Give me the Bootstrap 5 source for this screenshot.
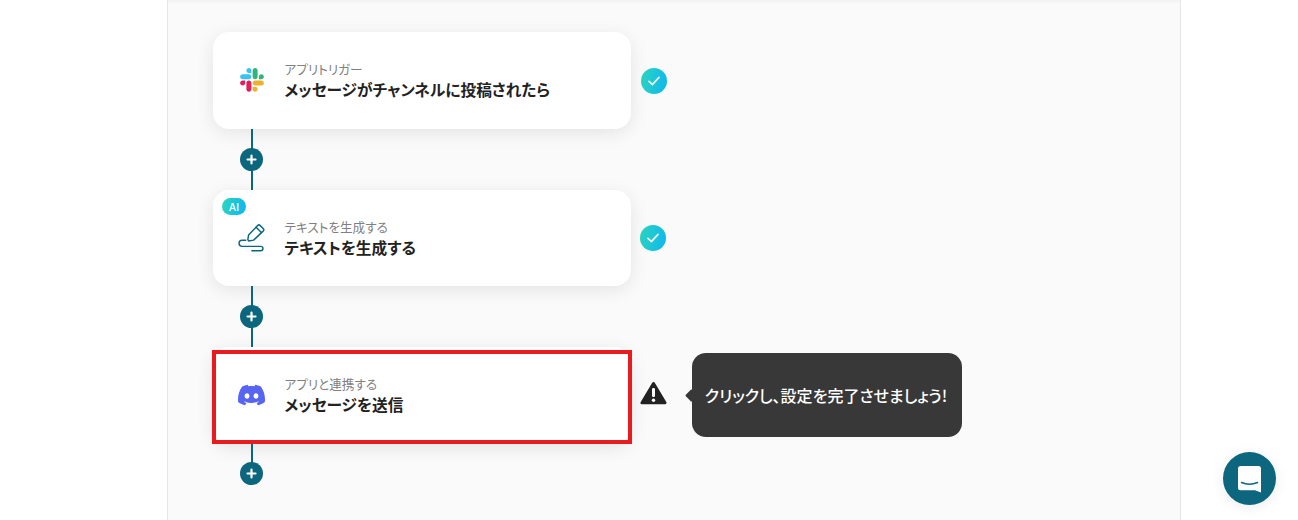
<!DOCTYPE html>
<html lang="ja">
<head>
<meta charset="utf-8">
<title>Flow</title>
<link href="https://cdn.jsdelivr.net/npm/bootstrap@5.3.0/dist/css/bootstrap.min.css" rel="stylesheet">
<style>
html,body{height:520px;overflow:hidden;background:#fff;font-family:"Noto Sans CJK JP","Noto Sans",sans-serif;color:#222;font-feature-settings:"palt"}
.page-wrap{padding-left:167px;padding-right:117px;height:520px}
.flow-panel{height:520px;background:#fafafa;border-left:1px solid #e6e6e6;border-right:1px solid #e6e6e6;padding:32px 0 0 45px;box-shadow:inset 0 4px 4px -3px rgba(0,0,0,.05)}
.step-row{height:96.5px}
.step-card{width:418px;height:96.5px;background:#fff;border-radius:16px;box-shadow:0 4px 18px rgba(0,0,0,.09);padding-left:25px;flex:none}
.icon-col{width:27px;margin-right:19.5px;flex:none}
.step-text{padding-top:1px}
.step-label{font-size:12.6px;line-height:16px;color:#808080;margin-bottom:3px}
.step-title{font-size:15.7px;line-height:20px;font-weight:700;color:#222}
.connector{width:2px;height:61px;background:#0b667e;margin-left:38px;position:relative}
.connector-end{height:30px}
.plus-dot{position:absolute;left:-11px;top:50%;width:23px;height:23px;margin-top:-11.5px;border-radius:50%;background:#0b667e}
.connector-end .plus-dot{top:18px;margin-top:0}
.ai-tag{position:absolute;left:9px;top:8px;width:24px;height:17.5px;border-radius:9px;background:linear-gradient(100deg,#2dd6bc,#0cb6f2);color:#fff;font-size:10.5px;line-height:19px;text-align:center;font-weight:500;font-family:Inter,"Noto Sans",sans-serif}
.check-dot{width:26px;height:26px;border-radius:50%;background:linear-gradient(100deg,#2dd6bc,#0cb6f2);flex:none}
.check-a{margin-left:10px;margin-top:2px}
.check-b{margin-left:9px}
.warn-icon{margin-left:9px;margin-top:-4px;flex:none}
.tip-arrow{width:9px;height:9px;background:#383838;transform:rotate(45deg);margin-left:20px;margin-right:-4px;flex:none;border-radius:1px}
.tip-box{width:270px;height:84px;border-radius:14px;background:#383838;color:#fff;font-size:16px;font-weight:500;flex:none;padding-right:2px}
.red-frame{position:absolute;left:-1px;right:-.5px;top:3px;bottom:-.5px;border:4px solid #e81c1f}
.chat-btn{position:absolute;left:1223px;top:452px;width:53px;height:53px;border-radius:50%;background:#0b667e;box-shadow:0 2px 14px rgba(0,0,0,.08)}
</style>
</head>
<body>
<div class="page-wrap">
 <div class="flow-panel">
  <div class="step-row d-flex align-items-center">
   <div class="step-card d-flex align-items-center position-relative">
    <div class="icon-col d-flex justify-content-center">
     <svg width="24" height="24" viewBox="0 0 127 127"><path fill="#E01E5A" d="M27.2 80c0 7.3-5.9 13.2-13.2 13.2C6.7 93.2.8 87.3.8 80c0-7.3 5.9-13.2 13.2-13.2h13.2V80zm6.6 0c0-7.3 5.9-13.2 13.2-13.2 7.3 0 13.2 5.9 13.2 13.2v33c0 7.3-5.9 13.2-13.2 13.2-7.3 0-13.2-5.9-13.2-13.2V80z"/><path fill="#36C5F0" d="M47 27c-7.3 0-13.2-5.9-13.2-13.2C33.8 6.5 39.7.6 47 .6c7.3 0 13.2 5.9 13.2 13.2V27H47zm0 6.7c7.3 0 13.2 5.9 13.2 13.2 0 7.3-5.9 13.2-13.2 13.2H13.9C6.6 60.1.7 54.2.7 46.9c0-7.3 5.9-13.2 13.2-13.2H47z"/><path fill="#2EB67D" d="M99.9 46.9c0-7.3 5.9-13.2 13.2-13.2 7.3 0 13.2 5.9 13.2 13.2 0 7.3-5.9 13.2-13.2 13.2H99.9V46.9zm-6.6 0c0 7.3-5.9 13.2-13.2 13.2-7.3 0-13.2-5.9-13.2-13.2V13.8C66.9 6.5 72.8.6 80.1.6c7.3 0 13.2 5.9 13.2 13.2v33.1z"/><path fill="#ECB22E" d="M80.1 99.8c7.3 0 13.2 5.9 13.2 13.2 0 7.3-5.9 13.2-13.2 13.2-7.3 0-13.2-5.9-13.2-13.2V99.8h13.2zm0-6.6c-7.3 0-13.2-5.9-13.2-13.2 0-7.3 5.9-13.2 13.2-13.2h33.1c7.3 0 13.2 5.9 13.2 13.2 0 7.3-5.9 13.2-13.2 13.2H80.1z"/></svg>
    </div>
    <div class="step-text">
     <div class="step-label">アプリトリガー</div>
     <div class="step-title">メッセージがチャンネルに投稿されたら</div>
    </div>
   </div>
   <div class="check-dot check-a d-flex align-items-center justify-content-center">
    <svg width="14" height="12" viewBox="0 0 14 12"><path d="M2 6.4l3.4 3.2L12 2.4" fill="none" stroke="#fff" stroke-width="1.6" stroke-linecap="round" stroke-linejoin="round"/></svg>
   </div>
  </div>
  <div class="connector"><div class="plus-dot d-flex align-items-center justify-content-center"><svg width="11" height="11" viewBox="0 0 11 11"><path d="M5.5 1.5v8M1.5 5.5h8" stroke="#fff" stroke-width="2.2" stroke-linecap="round"/></svg></div></div>
  <div class="step-row d-flex align-items-center">
   <div class="step-card d-flex align-items-center position-relative">
    <span class="ai-tag">AI</span>
    <div class="icon-col d-flex justify-content-center">
     <svg width="28" height="30" viewBox="0 0 28 30"><g fill="none" stroke="#0b667e" stroke-width="1.5" stroke-linecap="round" stroke-linejoin="round"><path d="M10.200 16.800l.8-5L20.600 1.900a1.600 1.600 0 0 1 2.200 0l3.500 3.500a1.600 1.600 0 0 1 0 2.200L16.200 17.200l-5.200 .9z"/><path d="M18.800 3.800l5.400 5.400"/><path d="M8 17.300H4.300a3.200 3.200 0 0 0 0 6.400h19.300a2.300 2.300 0 0 1 0 4.600h-9.200"/></g></svg>
    </div>
    <div class="step-text">
     <div class="step-label">テキストを生成する</div>
     <div class="step-title">テキストを生成する</div>
    </div>
   </div>
   <div class="check-dot check-b d-flex align-items-center justify-content-center">
    <svg width="14" height="12" viewBox="0 0 14 12"><path d="M2 6.4l3.4 3.2L12 2.4" fill="none" stroke="#fff" stroke-width="1.6" stroke-linecap="round" stroke-linejoin="round"/></svg>
   </div>
  </div>
  <div class="connector"><div class="plus-dot d-flex align-items-center justify-content-center"><svg width="11" height="11" viewBox="0 0 11 11"><path d="M5.5 1.5v8M1.5 5.5h8" stroke="#fff" stroke-width="2.2" stroke-linecap="round"/></svg></div></div>
  <div class="step-row d-flex align-items-center">
   <div class="step-card d-flex align-items-center position-relative">
    <div class="icon-col d-flex justify-content-center">
     <svg width="28" height="28" viewBox="0 0 24 24"><path fill="#5865F2" d="M20.317 4.3698a19.7913 19.7913 0 00-4.8851-1.5152.0741.0741 0 00-.0785.0371c-.211.3753-.4447.8648-.6083 1.2495-1.8447-.2762-3.68-.2762-5.4868 0-.1636-.3933-.4058-.8742-.6177-1.2495a.077.077 0 00-.0785-.037 19.7363 19.7363 0 00-4.8852 1.515.0699.0699 0 00-.0321.0277C.5334 9.0458-.319 13.5799.0992 18.0578a.0824.0824 0 00.0312.0561c2.0528 1.5076 4.0413 2.4228 5.9929 3.0294a.0777.0777 0 00.0842-.0276c.4616-.6304.8731-1.2952 1.226-1.9942a.076.076 0 00-.0416-.1057c-.6528-.2476-1.2743-.5495-1.8722-.8923a.077.077 0 01-.0076-.1277c.1258-.0943.2517-.1923.3718-.2914a.0743.0743 0 01.0776-.0105c3.9278 1.7933 8.18 1.7933 12.0614 0a.0739.0739 0 01.0785.0095c.1202.099.246.1981.3728.2924a.077.077 0 01-.0066.1276 12.2986 12.2986 0 01-1.873.8914.0766.0766 0 00-.0407.1067c.3604.698.7719 1.3628 1.225 1.9932a.076.076 0 00.0842.0286c1.961-.6067 3.9495-1.5219 6.0023-3.0294a.077.077 0 00.0313-.0552c.5004-5.177-.8382-9.6739-3.5485-13.6604a.061.061 0 00-.0312-.0286zM8.02 15.3312c-1.1825 0-2.1569-1.0857-2.1569-2.419 0-1.3332.9555-2.4189 2.157-2.4189 1.2108 0 2.1757 1.0952 2.1568 2.419 0 1.3332-.9555 2.4189-2.1569 2.4189zm7.9748 0c-1.1825 0-2.1569-1.0857-2.1569-2.419 0-1.3332.9554-2.4189 2.1569-2.4189 1.2108 0 2.1757 1.0952 2.1568 2.419 0 1.3332-.946 2.4189-2.1568 2.4189Z"/></svg>
    </div>
    <div class="step-text">
     <div class="step-label">アプリと連携する</div>
     <div class="step-title">メッセージを送信</div>
    </div>
    <div class="red-frame"></div>
   </div>
   <svg class="warn-icon" width="27" height="24" viewBox="0 0 27 24"><path fill="#222" stroke="#222" stroke-width="3" stroke-linejoin="round" d="M13.500 2.500L2 21.800h23z"/><rect x="12" y="7" width="3" height="9" rx="1.200" fill="#fff"/><circle cx="13.500" cy="19.200" r="1.700" fill="#fff"/></svg>
   <div class="tip-arrow"></div>
   <div class="tip-box d-flex align-items-center justify-content-center">クリックし、設定を完了させましょう!</div>
  </div>
  <div class="connector connector-end"><div class="plus-dot d-flex align-items-center justify-content-center"><svg width="11" height="11" viewBox="0 0 11 11"><path d="M5.5 1.5v8M1.5 5.5h8" stroke="#fff" stroke-width="2.2" stroke-linecap="round"/></svg></div></div>
 </div>
</div>
<div class="chat-btn d-flex align-items-center justify-content-center">
 <svg width="26" height="28" viewBox="0 0 26 28"><path fill="#fff" d="M3.500 1h18A2.500 2.500 0 0 1 24 3.500V27.500l-6-2.200H3.500A2.500 2.500 0 0 1 1 22.800V3.500A2.500 2.500 0 0 1 3.500 1z"/><path d="M4.500 17.500q8 3.500 16 0" fill="none" stroke="#0b667e" stroke-width="1.500" stroke-linecap="round"/></svg>
</div>
</body>
</html>
